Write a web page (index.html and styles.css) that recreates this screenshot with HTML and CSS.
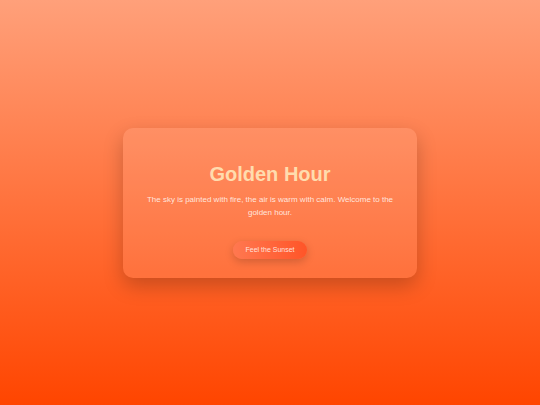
FILE: index.html
```html
<!DOCTYPE html>
<html lang="en">
<head>
<meta charset="utf-8">
<title>Golden Hour</title>
<link rel="stylesheet" href="styles.css">
</head>
<body>
<main class="page">
  <section class="card">
    <h1 class="title">Golden Hour</h1>
    <p class="text">The sky is painted with fire, the air is warm with calm. Welcome to the golden hour.</p>
    <button class="btn">Feel the Sunset</button>
  </section>
</main>
</body>
</html>
```
FILE: styles.css
```css
html, body {
  margin: 0;
  padding: 0;
  height: 100%;
}
body {
  font-family: "Liberation Sans", Arial, sans-serif;
  background: linear-gradient(to bottom, #ffa07a, #ff4500);
}
.page {
  height: 100%;
  display: flex;
  align-items: center;
  justify-content: center;
}
.card {
  width: 294px;
  box-sizing: border-box;
  padding: 35px 20px 19px;
  border-radius: 10px;
  background: rgba(255, 255, 255, 0.1);
  box-shadow: 0 8px 20px rgba(0, 0, 0, 0.22);
  text-align: center;
}
.title {
  margin: 0;
  font-size: 20px;
  line-height: 23px;
  font-weight: bold;
  color: #ffdcae;
}
.text {
  margin: 7px 0 22px;
  font-size: 8px;
  line-height: 13px;
  color: rgba(255, 240, 232, 0.92);
}
.btn {
  display: block;
  margin: 0 auto;
  border: none;
  border-radius: 10px;
  padding: 5px 12px;
  font-family: inherit;
  font-size: 7px;
  line-height: 8px;
  height: 18px;
  box-sizing: border-box;
  color: rgba(255, 236, 228, 0.95);
  background: linear-gradient(90deg, #ff7850, #ff5528);
  box-shadow: 0 3px 8px rgba(0, 0, 0, 0.18);
}
```
